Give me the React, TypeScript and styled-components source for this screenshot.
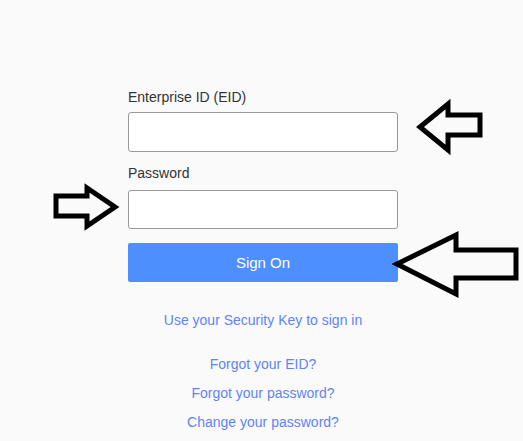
import styled, { createGlobalStyle } from "styled-components";

const GlobalStyle = createGlobalStyle`
  html, body {
    margin: 0;
    padding: 0;
    background: #fafafa;
  }
  * {
    box-sizing: border-box;
  }
`;

// Styled
const Page = styled.main`
  position: relative;
  width: 523px;
  height: 441px;
  overflow: hidden;
  background: #fafafa;
  font-family: Arial, "Liberation Sans", sans-serif;
  padding: 89px 0 0 128px;
`;
const Column = styled.section`
  width: 270px;
  display: flex;
  flex-direction: column;
`;
const Form = styled.form`
  width: 100%;
  display: flex;
  flex-direction: column;
`;
const Label = styled.label<{ $gap: number }>`
  display: block;
  font-size: 14px;
  line-height: 16px;
  color: #333;
  margin-bottom: ${({ $gap }) => $gap}px;
`;
const Input = styled.input<{ $h: number }>`
  width: 100%;
  height: ${({ $h }) => $h}px;
  border: 1px solid #999;
  border-radius: 3px;
  background: #fff;
  margin: 0 0 13px;
  padding: 0 8px;
  font-size: 14px;
  outline: none;
`;
const Button = styled.button`
  width: 100%;
  height: 39px;
  margin-top: 1px;
  border: none;
  border-radius: 2px;
  background: #4d8ffd;
  color: #fff;
  font-family: Arial, "Liberation Sans", sans-serif;
  font-size: 15px;
  cursor: pointer;
`;
const Links = styled.div`
  display: flex;
  flex-direction: column;
  align-items: center;
  margin-top: 30px;
`;
const LinkText = styled.a<{ $mt?: number }>`
  display: block;
  font-size: 14px;
  line-height: 16px;
  color: #5f84f7;
  text-decoration: none;
  margin-top: ${({ $mt }) => $mt ?? 13}px;
`;
const Overlay = styled.svg`
  position: absolute;
  left: 0;
  top: 0;
  pointer-events: none;
`;

const arrows = [
  "420,127 448,104 448,115 480,115 480,135 448,135 448,150",
  "56,196 87,196 87,188 115,207 87,226 87,216 56,216",
  "397,264 456,235 456,250 516,250 516,278 456,278 456,294",
];

const App = () => {
  return (
    <>
      <GlobalStyle />
      <Page>
        <Column>
          <Form onSubmit={(e) => e.preventDefault()}>
            <Label $gap={7}>Enterprise ID (EID)</Label>
            <Input $h={40} type="text" />
            <Label $gap={9}>Password</Label>
            <Input $h={39} type="password" />
            <Button type="submit">Sign On</Button>
          </Form>
          <Links>
            <LinkText $mt={0} href="#">Use your Security Key to sign in</LinkText>
            <LinkText $mt={28} href="#">Forgot your EID?</LinkText>
            <LinkText href="#">Forgot your password?</LinkText>
            <LinkText href="#">Change your password?</LinkText>
          </Links>
        </Column>
        <Overlay width="523" height="441" viewBox="0 0 523 441">
          {arrows.map((pts, i) => (
            <polygon
              key={i}
              points={pts}
              fill="none"
              stroke="#000"
              strokeWidth={5}
              strokeLinejoin="miter"
            />
          ))}
        </Overlay>
      </Page>
    </>
  );
};

export default App;
